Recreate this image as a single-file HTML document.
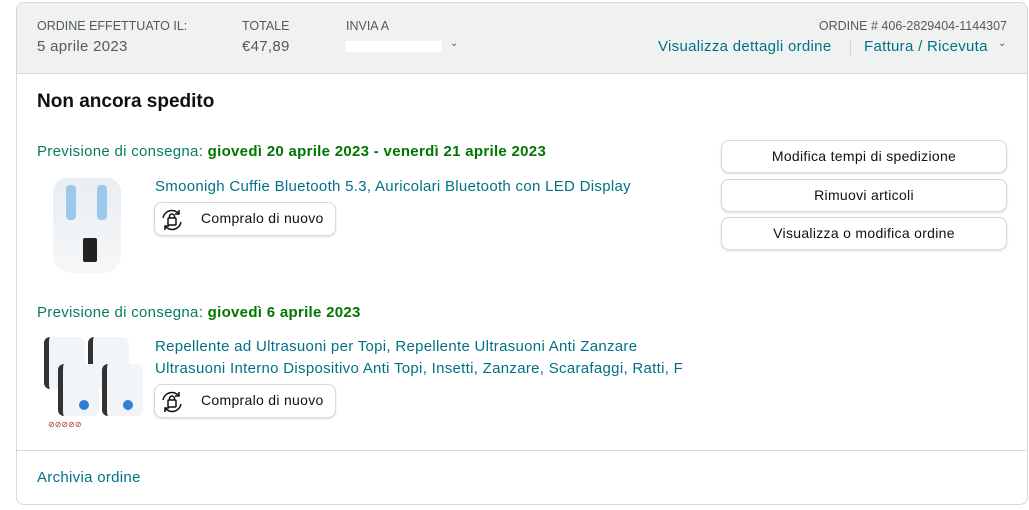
<!DOCTYPE html><html><head><style>
body{margin:0;width:1029px;height:510px;background:#fff;font-family:"Liberation Sans",sans-serif;position:relative;overflow:hidden}
.a{position:absolute;white-space:nowrap}
.card{position:absolute;left:16px;top:2px;width:1010px;height:501px;border:1px solid #d5d9d9;border-radius:8px;overflow:hidden}
.hd{position:absolute;left:0;top:0;width:1010px;height:70px;background:#f0f2f2;border-bottom:1px solid #d5d9d9}
.lbl{font-size:12.5px;color:#565959}
.val{font-size:15px;color:#565959;letter-spacing:.3px}
.lk{color:#007185;font-size:15px;letter-spacing:.3px}
.g{color:#067d62;font-size:15px;letter-spacing:.3px}
.g b{color:#007600}
.btn{position:absolute;border:1px solid #d5d9d9;border-radius:8px;background:#fff;box-shadow:0 1px 2px rgba(15,17,17,.15);font-size:14px;letter-spacing:.3px;color:#0f1111;text-align:center;box-sizing:border-box}
</style></head><body>
<div class="card">
<div class="hd"></div>
</div>
<div class="a lbl" style="left:37px;top:19px">ORDINE EFFETTUATO IL:</div>
<div class="a val" style="left:37px;top:38px">5 aprile 2023</div>
<div class="a lbl" style="left:242px;top:19px">TOTALE</div>
<div class="a val" style="left:242px;top:38px">€47,89</div>
<div class="a lbl" style="left:346px;top:19px">INVIA A</div>
<div class="a" style="left:346px;top:41px;width:96px;height:11px;background:#fff"></div>
<div class="a" style="left:450px;top:38px;font-size:10px;color:#565959">⌄</div>
<div class="a lbl" style="right:22px;top:19px">ORDINE # 406-2829404-1144307</div>
<div class="a lk" style="left:658px;top:38px">Visualizza dettagli ordine</div>
<div class="a" style="left:850px;top:39px;width:1px;height:17px;background:#d5d9d9"></div>
<div class="a lk" style="left:864px;top:38px">Fattura / Ricevuta</div>
<div class="a" style="left:998px;top:38px;font-size:10px;color:#565959">⌄</div>
<div class="a" style="left:37px;top:91px;font-size:19px;font-weight:bold;color:#0f1111">Non ancora spedito</div>
<div class="a g" style="left:37px;top:143px">Previsione di consegna: <b>giovedì 20 aprile 2023 - venerdì 21 aprile 2023</b></div>
<div class="a" style="left:53px;top:178px;width:68px;height:95px;background:linear-gradient(#e8eef3,#f6f7f8);border-radius:14px 14px 18px 18px"></div>
<div class="a" style="left:83px;top:238px;width:14px;height:24px;background:#222;border-radius:2px"></div>
<div class="a" style="left:66px;top:185px;width:10px;height:35px;background:#9cc8ec;border-radius:4px"></div>
<div class="a" style="left:97px;top:185px;width:10px;height:35px;background:#9cc8ec;border-radius:4px"></div>
<div class="a lk" style="left:155px;top:178px">Smoonigh Cuffie Bluetooth 5.3, Auricolari Bluetooth con LED Display</div>
<div class="btn" style="left:154px;top:202px;width:182px;height:34px"></div>
<svg class="a" style="left:159px;top:207px" width="26" height="26" viewBox="0 0 26 26" fill="none" stroke="#0f1111" stroke-width="1.5"><path d="M4 11a9 9 0 0 1 16-4"/><path d="M22 15a9 9 0 0 1-16 4"/><path d="M20 3v4h-4"/><path d="M6 23v-4h4"/><rect x="9" y="11" width="8" height="7" rx="1"/><path d="M10.5 11V9.5a2.5 2.5 0 0 1 5 0V11"/></svg>
<div class="a" style="left:201px;top:210px;font-size:14px;letter-spacing:.3px;color:#0f1111">Compralo di nuovo</div>
<div class="btn" style="left:721px;top:140px;width:286px;height:33px;line-height:31px">Modifica tempi di spedizione</div>
<div class="btn" style="left:721px;top:179px;width:286px;height:33px;line-height:31px">Rimuovi articoli</div>
<div class="btn" style="left:721px;top:217px;width:286px;height:33px;line-height:31px">Visualizza o modifica ordine</div>
<div class="a g" style="left:37px;top:304px">Previsione di consegna: <b>giovedì 6 aprile 2023</b></div>
<div class="a" style="left:44px;top:337px;width:36px;height:52px;background:#f2f5f8;border-left:5px solid #333;border-radius:6px"></div>
<div class="a" style="left:88px;top:337px;width:36px;height:52px;background:#f2f5f8;border-left:5px solid #333;border-radius:6px"></div>
<div class="a" style="left:58px;top:364px;width:36px;height:52px;background:#f2f5f8;border-left:5px solid #333;border-radius:6px"></div>
<div class="a" style="left:102px;top:364px;width:36px;height:52px;background:#f2f5f8;border-left:5px solid #333;border-radius:6px"></div>
<div class="a" style="left:79px;top:400px;width:10px;height:10px;border-radius:50%;background:#2f7fd6"></div>
<div class="a" style="left:123px;top:400px;width:10px;height:10px;border-radius:50%;background:#2f7fd6"></div>
<div class="a" style="left:48px;top:420px;width:62px;height:10px;color:#a33;font-size:8px">⊘⊘⊘⊘⊘</div>
<div class="a lk" style="left:155px;top:338px">Repellente ad Ultrasuoni per Topi, Repellente Ultrasuoni Anti Zanzare</div>
<div class="a lk" style="left:155px;top:360px">Ultrasuoni Interno Dispositivo Anti Topi, Insetti, Zanzare, Scarafaggi, Ratti, F</div>
<div class="btn" style="left:154px;top:384px;width:182px;height:34px"></div>
<svg class="a" style="left:159px;top:389px" width="26" height="26" viewBox="0 0 26 26" fill="none" stroke="#0f1111" stroke-width="1.5"><path d="M4 11a9 9 0 0 1 16-4"/><path d="M22 15a9 9 0 0 1-16 4"/><path d="M20 3v4h-4"/><path d="M6 23v-4h4"/><rect x="9" y="11" width="8" height="7" rx="1"/><path d="M10.5 11V9.5a2.5 2.5 0 0 1 5 0V11"/></svg>
<div class="a" style="left:201px;top:392px;font-size:14px;letter-spacing:.3px;color:#0f1111">Compralo di nuovo</div>
<div class="a" style="left:17px;top:450px;width:1009px;height:1px;background:#d5d9d9"></div>
<div class="a lk" style="left:37px;top:469px">Archivia ordine</div>
</body></html>
